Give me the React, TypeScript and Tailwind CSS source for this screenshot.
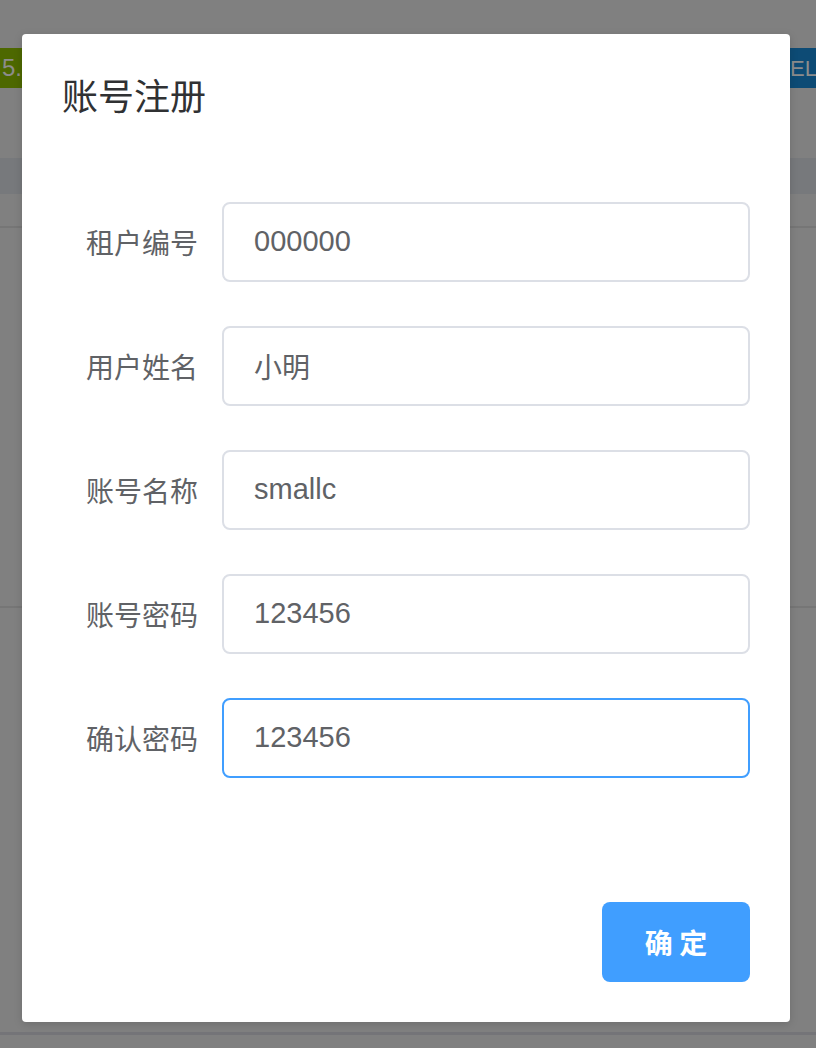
import React from "react";

const font = { fontFamily: '"Noto Sans CJK SC", "Liberation Sans", sans-serif' };
const latin = { fontFamily: '"Liberation Sans", "Noto Sans CJK SC", sans-serif' };

function Field({ label, value, focused, cjk }: { label: string; value: string; focused?: boolean; cjk?: boolean }) {
  return (
    <div className="flex items-center">
      <div className="w-[160px] shrink-0 pr-[24px] text-right text-[28px] leading-[80px] text-[#606266]">{label}</div>
      <div
        className={
          "flex h-[80px] flex-1 items-center rounded-[8px] border-2 bg-white px-[30px] text-[#606266] " +
          (focused ? "border-[#409eff] " : "border-[#dcdfe6] ") +
          (cjk ? "text-[28px]" : "text-[29px]")
        }
        style={cjk ? font : latin}
      >
        {value}
      </div>
    </div>
  );
}

export default function App() {
  return (
    <div className="relative h-[1048px] w-[816px] overflow-hidden bg-[#808080]" style={font}>
      {/* underlying page */}
      <div className="flex flex-col">
        <div className="h-[48px]" />
        <div className="flex h-[40px] justify-between">
          <div className="flex w-[80px] items-center overflow-hidden whitespace-nowrap bg-[#4d6800] pl-[2px] text-[24px] text-[#8c8c8c]" style={{ fontFamily: '"Liberation Sans", sans-serif' }}>5.0</div>
          <div className="flex w-[60px] items-center overflow-hidden whitespace-nowrap bg-[#0d4b75] pl-[34px] text-[22px] text-[#8c8c8c]" style={{ fontFamily: '"Liberation Sans", sans-serif' }}>EL</div>
        </div>
        <div className="h-[70px]" />
        <div className="h-[36px] bg-[#77797c]" />
        <div className="h-[32px]" />
        <div className="h-[2px] bg-[#767676]" />
        <div className="h-[378px]" />
        <div className="h-[2px] bg-[#767676]" />
        <div className="h-[424px]" />
        <div className="h-[3px] bg-[#747478]" />
      </div>

      {/* dialog */}
      <div className="absolute left-[22px] top-[34px] flex h-[988px] w-[768px] flex-col rounded-[4px] bg-white px-[40px] pb-[40px] shadow-[0_2px_8px_rgba(0,0,0,0.15)]">
        <div className="pt-[36px] text-[36px] leading-[48px] text-[#303133]">账号注册</div>
        <div className="mt-[84px] flex flex-col gap-[44px]">
          <Field label="租户编号" value="000000" />
          <Field label="用户姓名" value="小明" cjk />
          <Field label="账号名称" value="smallc" />
          <Field label="账号密码" value="123456" />
          <Field label="确认密码" value="123456" focused />
        </div>
        <div className="mt-auto flex justify-end">
          <button className="flex h-[80px] w-[148px] items-center justify-center rounded-[8px] bg-[#409eff] text-[28px] font-bold text-white">
            确 定
          </button>
        </div>
      </div>
    </div>
  );
}
